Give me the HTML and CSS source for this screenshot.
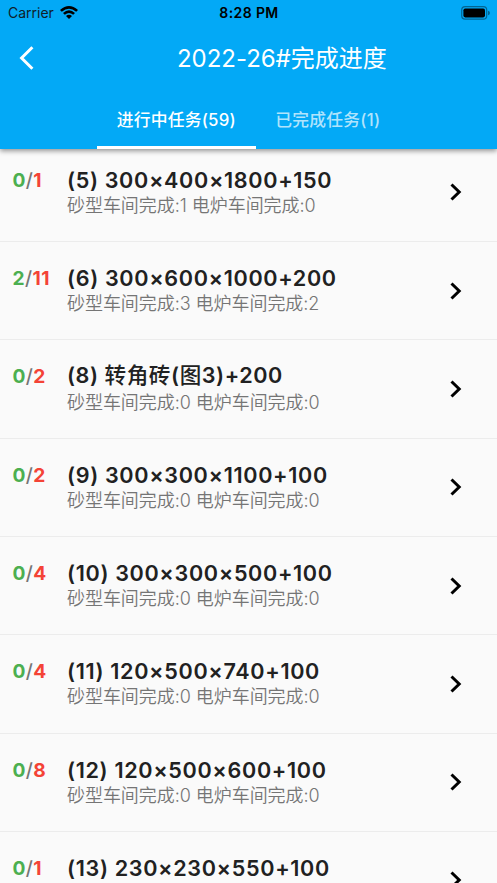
FILE: index.html
```
<!DOCTYPE html>
<html lang="zh-CN">
<head>
<meta charset="utf-8">
<title>2022-26#完成进度</title>
<link rel="stylesheet" href="styles.css">
</head>
<body>
<div class="screen">
  <header class="app-bar">
    <div class="status">
      <div class="carrier"><span>Carrier</span>
        <svg class="wifi" width="18" height="13" viewBox="0 0 18 13"><path d="M0 3.9Q9-3.8 18 3.9L16.2 5.8Q9-.3 1.8 5.8Z"/><path d="M3 7Q9 1.7 15 7L13.2 8.8Q9 5.2 4.8 8.8Z"/><path d="M6 10.1Q9 7.6 12 10.1L9 13Z"/></svg>
      </div>
      <div class="clock">8:28 PM</div>
      <svg class="battery" width="29" height="14" viewBox="0 0 29 14"><rect x=".7" y=".7" width="25" height="12.4" rx="3.4" fill="none" stroke="#000" stroke-opacity=".4" stroke-width="1.2"/><rect x="2.4" y="2.4" width="21.6" height="9" rx="1.8"/><path d="M27.2 4.7Q28.8 5.3 28.8 7T27.2 9.2Z" fill-opacity=".5"/></svg>
    </div>
    <div class="title-bar">
      <svg class="back" width="16" height="24" viewBox="0 0 16 24"><path d="M14.4 1.2L3.6 12L14.4 22.8" fill="none" stroke="#fff" stroke-width="3"/></svg>
      <h1>2022-26#完成进度</h1>
    </div>
    <nav class="tabs"><div class="tab active">进行中任务(59)</div><div class="tab">已完成任务(1)</div></nav>
  </header>
  <main class="list">
    <div class="row"><div class="count"><b class="done">0</b>/<b class="total">1</b></div><div class="info"><h2>(5) 300×400×1800+150</h2><p>砂型车间完成:1 电炉车间完成:0</p></div><svg class="chevron" viewBox="0 0 12 18"><path d="M1.5 1.5L9.2 9L1.5 16.5"/></svg></div>
    <div class="row"><div class="count"><b class="done">2</b>/<b class="total">11</b></div><div class="info"><h2>(6) 300×600×1000+200</h2><p>砂型车间完成:3 电炉车间完成:2</p></div><svg class="chevron" viewBox="0 0 12 18"><path d="M1.5 1.5L9.2 9L1.5 16.5"/></svg></div>
    <div class="row"><div class="count"><b class="done">0</b>/<b class="total">2</b></div><div class="info"><h2 class="named">(8) <span class="han">转角砖</span>(<span class="han">图</span>3)+200</h2><p>砂型车间完成:0 电炉车间完成:0</p></div><svg class="chevron" viewBox="0 0 12 18"><path d="M1.5 1.5L9.2 9L1.5 16.5"/></svg></div>
    <div class="row"><div class="count"><b class="done">0</b>/<b class="total">2</b></div><div class="info"><h2>(9) 300×300×1100+100</h2><p>砂型车间完成:0 电炉车间完成:0</p></div><svg class="chevron" viewBox="0 0 12 18"><path d="M1.5 1.5L9.2 9L1.5 16.5"/></svg></div>
    <div class="row"><div class="count"><b class="done">0</b>/<b class="total">4</b></div><div class="info"><h2>(10) 300×300×500+100</h2><p>砂型车间完成:0 电炉车间完成:0</p></div><svg class="chevron" viewBox="0 0 12 18"><path d="M1.5 1.5L9.2 9L1.5 16.5"/></svg></div>
    <div class="row"><div class="count"><b class="done">0</b>/<b class="total">4</b></div><div class="info"><h2>(11) 120×500×740+100</h2><p>砂型车间完成:0 电炉车间完成:0</p></div><svg class="chevron" viewBox="0 0 12 18"><path d="M1.5 1.5L9.2 9L1.5 16.5"/></svg></div>
    <div class="row"><div class="count"><b class="done">0</b>/<b class="total">8</b></div><div class="info"><h2>(12) 120×500×600+100</h2><p>砂型车间完成:0 电炉车间完成:0</p></div><svg class="chevron" viewBox="0 0 12 18"><path d="M1.5 1.5L9.2 9L1.5 16.5"/></svg></div>
    <div class="row"><div class="count"><b class="done">0</b>/<b class="total">1</b></div><div class="info"><h2>(13) 230×230×550+100</h2></div><svg class="chevron" viewBox="0 0 12 18"><path d="M1.5 1.5L9.2 9L1.5 16.5"/></svg></div>
  </main>
</div>
</body>
</html>
```
FILE: styles.css
```
* { box-sizing: border-box; }
body { margin: 0; background: #fafafa; font-family: Inter, "Noto Sans CJK SC", sans-serif; }
.screen { height: 883px; overflow: hidden; display: flex; flex-direction: column; }
h1, h2, p { margin: 0; }
.app-bar { position: relative; z-index: 1; flex: none; height: 149px; background: #03a9f6; box-shadow: 0 2px 5px rgba(0,0,0,.42); display: flex; flex-direction: column; }
.status { height: 25px; display: grid; grid-template-columns: 1fr auto 1fr; align-items: center; padding: 0 7px 0 8px; font-size: 14px; color: #000; }
.carrier { display: flex; align-items: center; gap: 6px; letter-spacing: 0; color: #10202a; }
.wifi { margin-top: -1px; fill: #000; }
.clock { font-weight: 600; letter-spacing: .4px; }
.battery { justify-self: end; }
.title-bar { height: 66px; display: flex; align-items: center; padding-left: 18px; }
.back { flex: none; }
h1 { flex: 1; padding: 2px 0 0 143px; font-size: 24px; line-height: 36px; font-weight: 400; color: #fff; letter-spacing: -.03px; white-space: nowrap; }
.tabs { height: 58px; display: flex; justify-content: center; }
.tab { padding: 0 19.7px; line-height: 58px; font-size: 16.8px; font-weight: 500; letter-spacing: .22px; color: rgba(255,255,255,.7); border-bottom: 3px solid transparent; white-space: nowrap; }
.tab.active { color: #fff; border-color: #fff; }
.list { flex: none; margin-top: -5.2px; }
.row { height: 98.3px; display: flex; border-bottom: 1px solid #ececec; padding: 19px 35px 0 12.5px; }
.count { width: 54.5px; font-size: 19.2px; line-height: 34px; font-weight: 500; letter-spacing: .4px; color: #757575; white-space: nowrap; }
.count b { font-weight: 650; }
.count .done { color: #4caf50; }
.count .total { color: #f44336; }
.info { flex: 1; white-space: nowrap; }
h2 { font-size: 21.6px; line-height: 34px; height: 31px; font-weight: 600; letter-spacing: .65px; color: #212121; }
.named { height: 32px; line-height: 33px; letter-spacing: .55px; }
.han { font-weight: 500; }
p { font-size: 18px; line-height: 24px; font-weight: 350; letter-spacing: -.05px; color: #757575; }
.chevron { flex: none; width: 12px; height: 18px; margin-top: 20.5px; }
.chevron path { fill: none; stroke: #000; stroke-width: 3; }
```
